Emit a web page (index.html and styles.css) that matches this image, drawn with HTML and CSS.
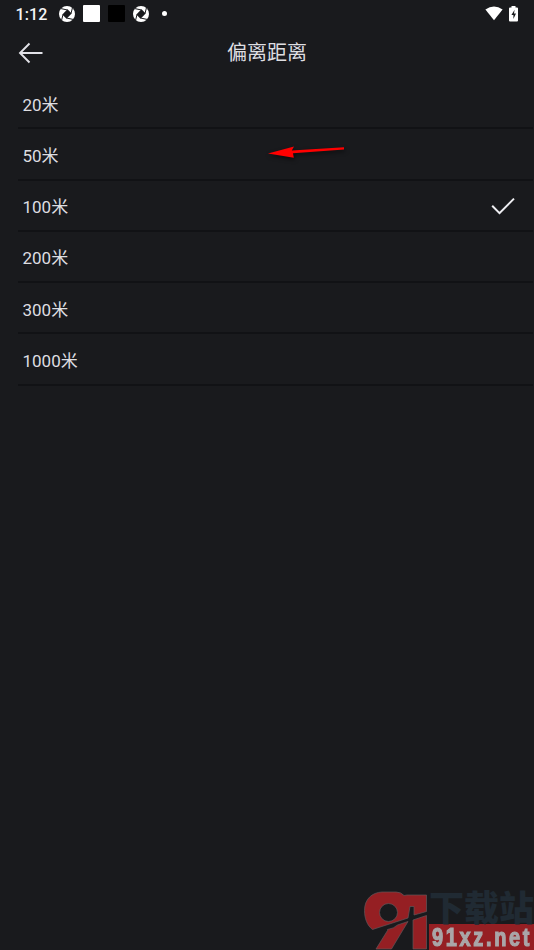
FILE: index.html
```html
<!DOCTYPE html>
<html lang="zh-CN">
<head>
<meta charset="utf-8">
<title>偏离距离</title>
<link rel="stylesheet" href="styles.css">
</head>
<body>
<svg class="defs" aria-hidden="true">
  <symbol id="shutter" viewBox="0 0 16 16">
    <circle cx="8" cy="8" r="8" fill="#fff"/>
    <path d="M8.500 3.300 12.700 7.500 7.500 12.700 3.300 8.500Z" fill="#191a1d"/>
    <path d="M8.500 4 1.500 2.500M12 7.500 13.500 1.500M7.500 12 14.500 13.500M4 8.500 2.500 14.500" fill="none" stroke="#191a1d" stroke-width="1"/>
  </symbol>
</svg>
<div class="status">
  <span class="clock">1:12</span>
  <svg class="shutter"><use href="#shutter"/></svg>
  <span class="square"></span>
  <span class="square dark"></span>
  <svg class="shutter second"><use href="#shutter"/></svg>
  <span class="dot"></span>
  <svg class="wifi" viewBox="0 0 18 15"><path d="M.4 3.500Q9-2.500 17.600 3.500L9 14.200Z" fill="#fff"/></svg>
  <svg class="battery" viewBox="0 0 9 16"><path d="M2.500 0h4v1.500H8q1 0 1 1V14.500q0 1-1 1H1q-1 0-1-1V2.500q0-1 1-1h1.500Z" fill="#fff"/><path d="M5.600 3.800 2.400 9h2v4L7 7.600H5Z" fill="#191a1d"/></svg>
</div>
<header class="header">
  <svg class="back" viewBox="0 0 26 22"><path d="M11.500 1.500 2 11l9.500 9.500M2 11H24.500" fill="none" stroke="#e2e2e8" stroke-width="1.900"/></svg>
  <h1>偏离距离</h1>
</header>
<ul class="options">
  <li>20米</li>
  <li>50米
    <svg class="pointer" viewBox="0 0 84 24"><path d="M4 13.500 30 6.500 27.800 10.600 80 7.200V9.500L29 13.200 29.800 17.800Z" fill="#f00"/></svg>
  </li>
  <li>100米
    <svg class="check" viewBox="0 0 24 18"><path d="M1.200 8.800 8.500 16.100 23 1.600" fill="none" stroke="#eeeef2" stroke-width="2"/></svg>
  </li>
  <li>200米</li>
  <li>300米</li>
  <li>1000米</li>
</ul>
<div class="brand">
  <svg class="emblem" viewBox="0 0 64 60">
    <g fill="#951f23" stroke="#62565a" stroke-width=".7">
      <path fill-rule="evenodd" d="M9.500 39.500C4 35.500 1.500 28 1.500 20.500 1.500 9 9 2.500 19 2H33Q38 2 41 5.500L44 5H63.500V21.500L51 25V16.500H47L45 28ZM25.500 13.500A9 9 0 1 0 25.500 31.500 9 9 0 1 0 25.500 13.500Z"/>
      <path d="M24.500 39.500Q31 38.500 34.500 35L45 31.500 28.500 59H13L24.500 40.500Z"/>
      <path d="M50 30 63.500 25.500V59H50Z"/>
    </g>
  </svg>
  <div class="words">
    <div class="site">下载站</div>
    <div class="domain"><span>91xz.net</span></div>
  </div>
</div>
</body>
</html>
```

FILE: styles.css
```css
* { box-sizing: border-box; }
body {
  margin: 0;
  height: 950px;
  position: relative;
  overflow: hidden;
  background: #191a1d;
  color: #dedee1;
  font-family: Roboto, "Noto Sans CJK SC", sans-serif;
}
svg { display: block; flex: none; }
.defs { position: absolute; width: 0; height: 0; }
.status {
  height: 28px;
  display: flex;
  align-items: center;
  padding: 0 16px 1px 15px;
}
.clock { width: 44px; font-size: 16px; font-weight: 500; letter-spacing: .1px; color: #f5f5f5; padding: 1px 0 0 .5px; }
.shutter { width: 16px; height: 16px; }
.square { width: 17px; height: 17px; margin-left: 8px; background: #fff; border-radius: 1px; }
.square.dark { background: #000; }
.shutter.second { margin-left: 8px; }
.dot { width: 5px; height: 5px; border-radius: 50%; background: #fff; margin-left: 13px; }
.wifi { width: 18px; height: 15px; margin-left: auto; }
.battery { width: 9px; height: 16px; margin: 0 0 0 6px; }
.header {
  height: 50px;
  display: grid;
  grid-template-columns: 48px 1fr 48px;
  align-items: center;
}
.back { width: 26px; height: 22px; margin-left: 18px; }
h1 { margin: 0; text-align: center; font-size: 20px; line-height: 31px; font-weight: 400; }
.options { list-style: none; margin: 0 1px 0 18px; padding: 0; }
.options li {
  position: relative;
  height: 51.250px;
  display: flex;
  align-items: center;
  justify-content: space-between;
  padding: 1px 18px 0 4.500px;
  border-bottom: 2px solid #111215;
  font-size: 17px;
}
.check { width: 24px; height: 18px; }
.pointer { position: absolute; left: 246px; top: 11px; width: 84px; height: 24px; filter: drop-shadow(1px 2px 2px #0009); }
.brand { position: absolute; right: 0; bottom: 0; display: flex; width: 171px; height: 60px; }
.emblem { width: 64px; height: 60px; margin-right: 2px; }
.words { width: 105px; }
.site {
  height: 34px;
  line-height: 31px;
  font-family: "Noto Sans CJK SC", sans-serif;
  font-weight: 900;
  font-size: 35px;
  white-space: nowrap;
  color: #202a33;
}
.domain {
  height: 26px;
  padding-left: 3px;
  background: #951f23;
  color: #aaa6a8;
  font: 700 25px/26px "Liberation Sans", sans-serif;
  letter-spacing: 3.300px;
  -webkit-text-stroke: 1.200px #aaa6a8;
}
.domain span { display: inline-block; transform: scaleX(.8); transform-origin: 0 50%; }
```
